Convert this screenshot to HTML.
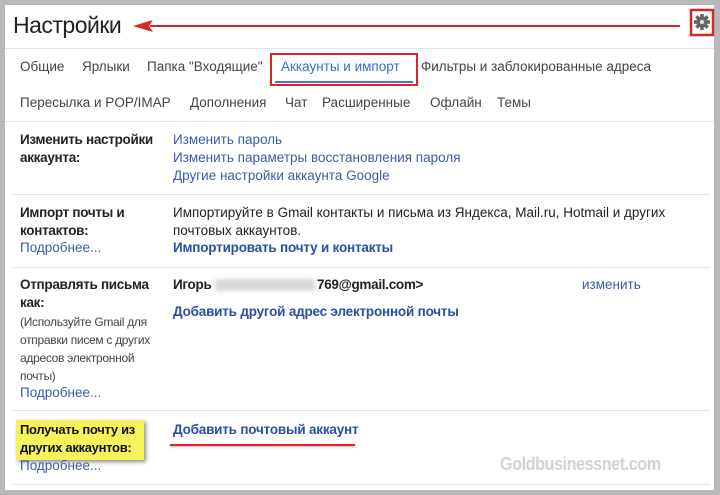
<!DOCTYPE html>
<html><head><meta charset="utf-8"><style>
*{margin:0;padding:0;box-sizing:border-box}
body{width:720px;height:495px;background:#b9b9b9;position:relative;overflow:hidden;font-family:"Liberation Sans","Noto Sans CJK SC",sans-serif;}
.panel{position:absolute;left:5px;top:5px;width:709px;height:485px;background:#fff}
.t{position:absolute;white-space:nowrap;font-size:13.5px;line-height:18px;letter-spacing:0px;color:#222}
.b{font-weight:bold;color:#222;letter-spacing:-0.3px}
.l{color:#3b5cab}
.lb{color:#2a4ea6;font-weight:bold;letter-spacing:-0.2px}
.g{color:#444}
.hr{position:absolute;left:13px;width:697px;height:1px;background:#e3e3e3}
.s{font-size:12px;color:#444;line-height:18px;letter-spacing:-0.3px}
</style></head><body>
<div class="panel"></div>
<div class="t" style="left:13px;top:11px;font-size:23px;line-height:28px;letter-spacing:-0.5px;color:#222">Настройки</div>
<svg style="position:absolute;left:0;top:0" width="720" height="60">
<line x1="150" y1="26" x2="680" y2="26" stroke="#d9262c" stroke-width="2"/>
<polygon points="133,26 153,20 149,26 153,32" fill="#d9262c"/>
<rect x="691" y="10" width="22" height="25" fill="none" stroke="#d9262c" stroke-width="2.5"/>
<g transform="translate(702,22)" fill="#666">
<circle r="5.5"/>
<rect x="-1.8" y="-8" width="3.6" height="16"/>
<rect x="-1.8" y="-8" width="3.6" height="16" transform="rotate(45)"/>
<rect x="-1.8" y="-8" width="3.6" height="16" transform="rotate(90)"/>
<rect x="-1.8" y="-8" width="3.6" height="16" transform="rotate(135)"/>
<circle r="2.2" fill="#ddd"/>
</g>
</svg>
<div class="hr" style="top:48px;left:5px;width:709px"></div>
<div class="t g" style="left:20px;top:58px">Общие</div>
<div class="t g" style="left:82px;top:58px">Ярлыки</div>
<div class="t g" style="left:147px;top:58px">Папка "Входящие"</div>
<div class="t" style="left:281px;top:58px;color:#3b6dc4">Аккаунты и импорт</div>
<div class="t g" style="left:421px;top:58px">Фильтры и заблокированные адреса</div>
<div style="position:absolute;left:270px;top:53px;width:148px;height:33px;border:2px solid #d9262c"></div>
<div style="position:absolute;left:275px;top:81px;width:138px;height:2px;background:#4a77c9"></div>
<div class="t g" style="left:20px;top:94px">Пересылка и POP/IMAP</div>
<div class="t g" style="left:190px;top:94px">Дополнения</div>
<div class="t g" style="left:285px;top:94px">Чат</div>
<div class="t g" style="left:322px;top:94px">Расширенные</div>
<div class="t g" style="left:430px;top:94px">Офлайн</div>
<div class="t g" style="left:497px;top:94px">Темы</div>
<div class="hr" style="top:121px;left:5px;width:709px"></div>

<div class="t b" style="left:20px;top:131px">Изменить настройки</div>
<div class="t b" style="left:20px;top:149px">аккаунта:</div>
<div class="t l" style="left:173px;top:131px">Изменить пароль</div>
<div class="t l" style="left:173px;top:149px">Изменить параметры восстановления пароля</div>
<div class="t l" style="left:173px;top:167px">Другие настройки аккаунта Google</div>
<div class="hr" style="top:194px"></div>

<div class="t b" style="left:20px;top:204px">Импорт почты и</div>
<div class="t b" style="left:20px;top:222px">контактов:</div>
<div class="t l" style="left:20px;top:239px">Подробнее...</div>
<div class="t" style="left:173px;top:204px">Импортируйте в Gmail контакты и письма из Яндекса, Mail.ru, Hotmail и других</div>
<div class="t" style="left:173px;top:222px">почтовых аккаунтов.</div>
<div class="t lb" style="left:173px;top:239px">Импортировать почту и контакты</div>
<div class="hr" style="top:267px"></div>

<div class="t b" style="left:20px;top:276px">Отправлять письма</div>
<div class="t b" style="left:20px;top:294px">как:</div>
<div class="t s" style="left:20px;top:313px">(Используйте Gmail для</div>
<div class="t s" style="left:20px;top:331px">отправки писем с других</div>
<div class="t s" style="left:20px;top:349px">адресов электронной</div>
<div class="t s" style="left:20px;top:367px">почты)</div>
<div class="t l" style="left:20px;top:384px">Подробнее...</div>
<div class="t b" style="left:173px;top:276px">Игорь</div>
<div style="position:absolute;left:215px;top:279px;width:100px;height:12px;background:#d8d8d8;filter:blur(2px)"></div>
<div class="t b" style="left:317px;top:276px">769@gmail.com&gt;</div>
<div class="t l" style="left:582px;top:276px">изменить</div>
<div class="t lb" style="left:173px;top:303px">Добавить другой адрес электронной почты</div>
<div class="hr" style="top:410px"></div>

<div style="position:absolute;left:16px;top:420px;width:128px;height:40px;background:#f6f25a;box-shadow:2px 2px 4px rgba(0,0,0,.45)"></div>
<div class="t b" style="left:20px;top:421px;color:#111;font-size:13px">Получать почту из</div>
<div class="t b" style="left:20px;top:439px;color:#111;font-size:13px">других аккаунтов:</div>
<div class="t l" style="left:20px;top:457px">Подробнее...</div>
<div class="t lb" style="left:173px;top:421px">Добавить почтовый аккаунт</div>
<div style="position:absolute;left:170px;top:444px;width:185px;height:2px;background:#d9262c;box-shadow:0 1px 2px rgba(0,0,0,.3)"></div>
<div class="t" style="left:500px;top:455px;font-weight:bold;font-size:18px;color:#d2d2d2;letter-spacing:-0.5px;transform:scaleX(0.9);transform-origin:left">Goldbusinessnet.com</div>
<div class="hr" style="top:484px"></div>
</body></html>
